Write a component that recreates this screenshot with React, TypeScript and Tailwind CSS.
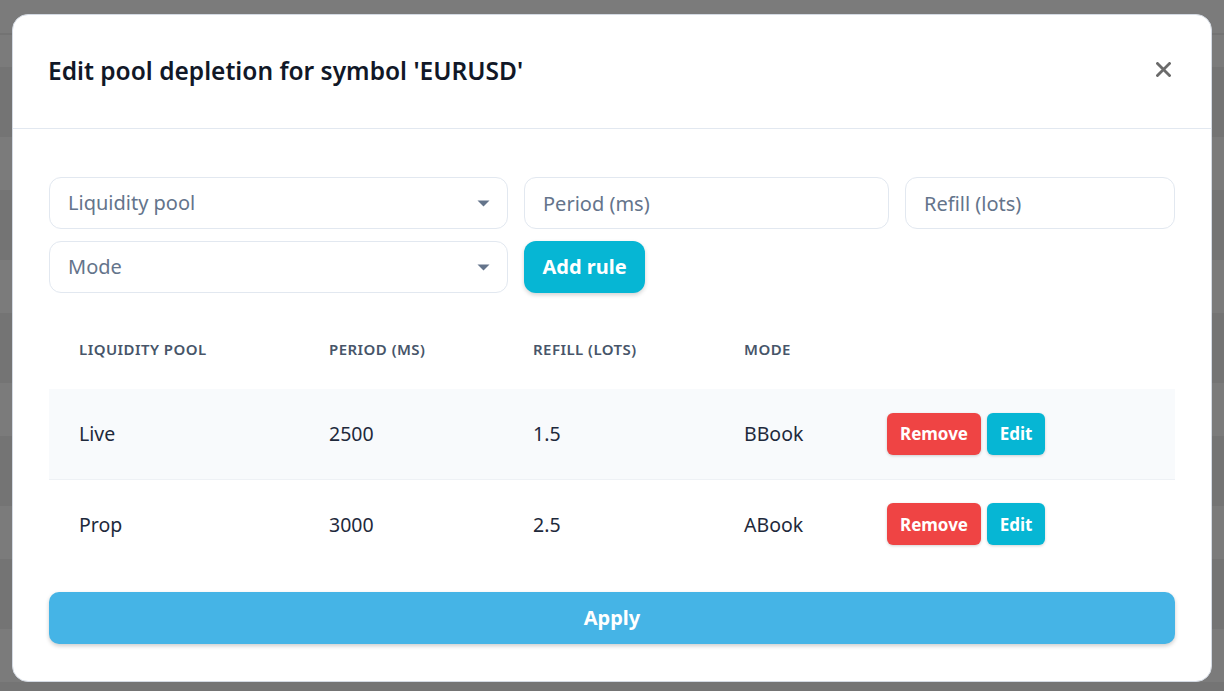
import React from "react";

type Rule = { pool: string; period: number; refill: string; mode: string };

const RULES: Rule[] = [
  { pool: "Live", period: 2500, refill: "1.5", mode: "BBook" },
  { pool: "Prop", period: 3000, refill: "2.5", mode: "ABook" },
];

const FONT = "font-['Noto_Sans',sans-serif]";

function Caret() {
  return (
    <svg width="13" height="7" viewBox="0 0 13 7" className="shrink-0">
      <path d="M0.5 0.5h12L6.5 6.5z" fill="#64748b" />
    </svg>
  );
}

function SelectBox({ placeholder }: { placeholder: string }) {
  return (
    <div className="flex h-[52px] w-[459px] items-center justify-between rounded-xl border border-[#e2e8f0] bg-white pl-[18px] pr-[17px]">
      <span className="text-[20px] text-[#64748b]">{placeholder}</span>
      <Caret />
    </div>
  );
}

function TextBox({ placeholder, width }: { placeholder: string; width: string }) {
  return (
    <input
      placeholder={placeholder}
      className={`h-[52px] ${width} rounded-xl border border-[#e2e8f0] bg-white px-[18px] text-[20px] text-[#1e293b] outline-none placeholder:text-[#64748b]`}
    />
  );
}

// faint rows of the page sitting behind the overlay
function Backdrop() {
  const bands = Array.from({ length: 6 });
  return (
    <div className="absolute inset-0 flex flex-col bg-[#7b7b7b]">
      <div className="h-[33px] shrink-0" />
      <div className="h-[2px] shrink-0 bg-[#737373]" />
      <div className="h-[32px] shrink-0" />
      {bands.map((_, i) => (
        <React.Fragment key={i}>
          <div className="h-[70px] shrink-0 bg-[#747474]" />
          <div className="h-[53px] shrink-0" />
        </React.Fragment>
      ))}
    </div>
  );
}

export default function App() {
  return (
    <div className={`relative h-[691px] w-[1224px] overflow-hidden ${FONT}`}>
      <Backdrop />
      <div className="relative px-[12px] pt-[14px]">
        <div className="flex h-[668px] w-[1200px] flex-col rounded-[16px] border border-[#d4dae3] bg-white">
          {/* header */}
          <div className="flex h-[114px] shrink-0 items-center justify-between border-b border-[#e2e8f0] pl-[35px] pr-[36px]">
            <h2 className="text-[24.5px] font-semibold text-[#111827]">
              Edit pool depletion for symbol 'EURUSD'
            </h2>
            <button aria-label="Close" className="-mt-1 flex h-6 w-6 items-center justify-center">
              <svg width="15" height="15" viewBox="0 0 15 15">
                <path d="M1.5 1.5l12 12M13.5 1.5l-12 12" stroke="#6b6b6b" strokeWidth="2.8" strokeLinecap="square" />
              </svg>
            </button>
          </div>

          {/* body */}
          <div className="flex flex-col px-[36px] pt-[48px]">
            <div className="flex flex-wrap gap-x-4 gap-y-3">
              <SelectBox placeholder="Liquidity pool" />
              <TextBox placeholder="Period (ms)" width="w-[365px]" />
              <TextBox placeholder="Refill (lots)" width="w-[270px]" />
              <SelectBox placeholder="Mode" />
              <button className="h-[52px] w-[121px] rounded-xl bg-[#06b6d4] text-[20px] font-bold text-white shadow-[0_2px_4px_rgba(0,0,0,0.18)]">
                Add rule
              </button>
            </div>

            <table className="mt-4 w-[1126px] table-fixed border-collapse text-left">
              <colgroup>
                <col className="w-[250px]" />
                <col className="w-[204px]" />
                <col className="w-[211px]" />
                <col className="w-[143px]" />
                <col />
              </colgroup>
              <thead>
                <tr className="h-[80px]">
                  {["Liquidity pool", "Period (ms)", "Refill (lots)", "Mode", ""].map((h) => (
                    <th
                      key={h}
                      className="pl-[30px] text-[15px] font-semibold uppercase tracking-[0.03em] text-[#475569]"
                    >
                      {h}
                    </th>
                  ))}
                </tr>
              </thead>
              <tbody>
                {RULES.map((r, i) => (
                  <tr
                    key={r.pool}
                    className={`h-[90px] text-[19.5px] text-[#1e293b] ${i % 2 === 0 ? "border-b border-[#eef1f5] bg-[#f8fafc]" : "bg-white"}`}
                  >
                    <td className="pl-[30px]">{r.pool}</td>
                    <td className="pl-[30px]">{r.period}</td>
                    <td className="pl-[30px]">{r.refill}</td>
                    <td className="pl-[30px]">{r.mode}</td>
                    <td className="pl-[30px]">
                      <div className="flex gap-[6px]">
                        <button className="h-[42px] w-[94px] rounded-md bg-[#ef4444] text-[17px] font-bold text-white shadow-[0_1px_3px_rgba(0,0,0,0.18)]">
                          Remove
                        </button>
                        <button className="h-[42px] w-[58px] rounded-md bg-[#06b6d4] text-[17px] font-bold text-white shadow-[0_1px_3px_rgba(0,0,0,0.18)]">
                          Edit
                        </button>
                      </div>
                    </td>
                  </tr>
                ))}
              </tbody>
            </table>

            <button className="mt-[23px] h-[52px] w-[1126px] rounded-[10px] bg-[#45b4e6] text-[20px] font-bold text-white shadow-[0_2px_4px_rgba(0,0,0,0.2)]">
              Apply
            </button>
          </div>
        </div>
      </div>
    </div>
  );
}
